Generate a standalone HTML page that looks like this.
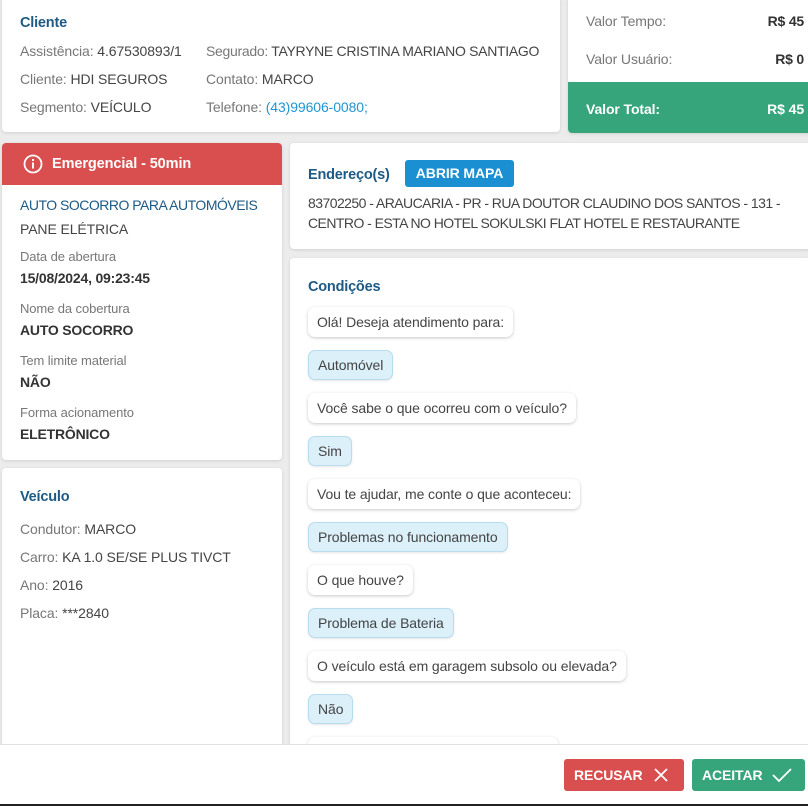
<!DOCTYPE html>
<html><head><meta charset="utf-8"><style>
*{margin:0;padding:0;box-sizing:border-box}
body{width:808px;height:806px;background:#ececec;font-family:"Liberation Sans",sans-serif;font-size:14px;color:#444;position:relative;overflow:hidden;letter-spacing:-0.1px}
.card{position:absolute;background:#fff;border-radius:4px;box-shadow:0 1px 3px rgba(0,0,0,.12)}
.t{position:absolute;white-space:nowrap;line-height:18px}
.h{color:#1d5a85;font-size:14.5px;font-weight:bold;letter-spacing:-0.2px}
.l{color:#777}
.s{color:#777;font-size:13px}
.b{font-weight:bold;color:#333;letter-spacing:-0.2px}
.bub{position:absolute;left:18px;height:30px;line-height:30px;padding:0 9px;border-radius:7px;background:#fff;box-shadow:0 1px 3px rgba(0,0,0,.22);white-space:nowrap;color:#444}
.bub.a{background:#dcf0fa;border:1px solid #b6dcee;line-height:28px;box-shadow:0 1px 2px rgba(0,0,0,.1)}
.btn{position:absolute;top:759px;height:32px;border-radius:3px;color:#fff;font-weight:bold;font-size:14px;line-height:32px;padding-left:10px}
</style></head><body>

<div class="card" style="left:2px;top:-4px;width:558px;height:136px">
<div class="t h" style="left:18px;top:18px">Cliente</div>
<div class="t" style="left:18px;top:46px"><span class="l">Assistência:</span> 4.67530893/1</div>
<div class="t" style="left:204px;top:46px;letter-spacing:-0.3px"><span class="l">Segurado:</span> TAYRYNE CRISTINA MARIANO SANTIAGO</div>
<div class="t" style="left:18px;top:74px"><span class="l">Cliente:</span> HDI SEGUROS</div>
<div class="t" style="left:204px;top:74px"><span class="l">Contato:</span> MARCO</div>
<div class="t" style="left:18px;top:102px"><span class="l">Segmento:</span> VEÍCULO</div>
<div class="t" style="left:204px;top:102px"><span class="l">Telefone:</span> <span style="color:#1e96d1">(43)99606-0080;</span></div>
</div>

<div class="card" style="left:568px;top:-4px;width:244px;height:137px;overflow:hidden">
<div class="t l" style="left:18px;top:16px">Valor Tempo:</div>
<div class="t b" style="right:8px;top:16px">R$ 45</div>
<div class="t l" style="left:18px;top:54px">Valor Usuário:</div>
<div class="t b" style="right:8px;top:54px">R$ 0</div>
<div style="position:absolute;left:0;top:86px;width:100%;height:51px;background:#36a57c"></div>
<div class="t" style="left:18px;top:104px;color:#fff;font-weight:bold">Valor Total:</div>
<div class="t" style="right:8px;top:104px;color:#fff;font-weight:bold">R$ 45</div>
</div>

<div class="card" style="left:2px;top:143px;width:280px;height:317px;overflow:hidden">
<div style="position:absolute;left:0;top:0;width:100%;height:42px;background:#d94f4f"></div>
<svg style="position:absolute;left:21px;top:11px" width="20" height="20" viewBox="0 0 20 20"><circle cx="10" cy="10" r="8.5" fill="none" stroke="#fff" stroke-width="1.8"/><rect x="9" y="8.5" width="2" height="6" fill="#fff"/><rect x="9" y="5" width="2" height="2" fill="#fff"/></svg>
<div class="t" style="left:50px;top:12px;color:#fff;font-weight:bold;font-size:14.5px">Emergencial - 50min</div>
<div class="t" style="left:18px;top:53px;color:#1d5a85;letter-spacing:-0.5px">AUTO SOCORRO PARA AUTOMÓVEIS</div>
<div class="t" style="left:18px;top:77px">PANE ELÉTRICA</div>
<div class="t s" style="left:18px;top:105px">Data de abertura</div>
<div class="t b" style="left:18px;top:126px">15/08/2024, 09:23:45</div>
<div class="t s" style="left:18px;top:157px">Nome da cobertura</div>
<div class="t b" style="left:18px;top:178px">AUTO SOCORRO</div>
<div class="t s" style="left:18px;top:209px">Tem limite material</div>
<div class="t b" style="left:18px;top:230px">NÃO</div>
<div class="t s" style="left:18px;top:261px">Forma acionamento</div>
<div class="t b" style="left:18px;top:282px">ELETRÔNICO</div>
</div>

<div class="card" style="left:2px;top:468px;width:280px;height:300px">
<div class="t h" style="left:18px;top:20px">Veículo</div>
<div class="t" style="left:18px;top:52px"><span class="l">Condutor:</span> MARCO</div>
<div class="t" style="left:18px;top:80px"><span class="l">Carro:</span> KA 1.0 SE/SE PLUS TIVCT</div>
<div class="t" style="left:18px;top:108px"><span class="l">Ano:</span> 2016</div>
<div class="t" style="left:18px;top:136px"><span class="l">Placa:</span> ***2840</div>
</div>

<div class="card" style="left:290px;top:143px;width:522px;height:106px">
<div class="t h" style="left:18px;top:23px">Endereço(s)</div>
<div style="position:absolute;left:115px;top:17px;width:109px;height:27px;background:#1a8fd1;border-radius:3px;color:#fff;font-weight:bold;line-height:27px;text-align:center">ABRIR MAPA</div>
<div class="t" style="left:18px;top:51px;letter-spacing:-0.55px">83702250 - ARAUCARIA - PR - RUA DOUTOR CLAUDINO DOS SANTOS - 131 -</div>
<div class="t" style="left:18px;top:71px;letter-spacing:-0.55px">CENTRO - ESTA NO HOTEL SOKULSKI FLAT HOTEL E RESTAURANTE</div>
</div>

<div class="card" style="left:290px;top:258px;width:522px;height:520px">
<div class="t h" style="left:18px;top:20px">Condições</div>
<div class="bub" style="top:49px">Olá! Deseja atendimento para:</div>
<div class="bub a" style="top:92px">Automóvel</div>
<div class="bub" style="top:135px">Você sabe o que ocorreu com o veículo?</div>
<div class="bub a" style="top:178px">Sim</div>
<div class="bub" style="top:221px">Vou te ajudar, me conte o que aconteceu:</div>
<div class="bub a" style="top:264px">Problemas no funcionamento</div>
<div class="bub" style="top:307px">O que houve?</div>
<div class="bub a" style="top:350px">Problema de Bateria</div>
<div class="bub" style="top:393px">O veículo está em garagem subsolo ou elevada?</div>
<div class="bub a" style="top:436px">Não</div>
<div class="bub" style="top:479px;width:250px">&nbsp;</div>
</div>

<div style="position:absolute;left:0;top:744px;width:808px;height:62px;background:#fff;border-top:1px solid #e2e2e2"></div>
<div class="btn" style="left:564px;width:120px;background:#d94f4f">RECUSAR
<svg style="position:absolute;left:90px;top:9px" width="14" height="14" viewBox="0 0 14 14"><path d="M1 1L13 13M13 1L1 13" stroke="#fff" stroke-width="1.8"/></svg></div>
<div class="btn" style="left:692px;width:113px;background:#36a57c">ACEITAR
<svg style="position:absolute;left:80px;top:8px" width="20" height="16" viewBox="0 0 20 16"><path d="M1 8L7 14L19 2" stroke="#fff" stroke-width="1.8" fill="none"/></svg></div>
<div style="position:absolute;left:0;top:804px;width:808px;height:2px;background:#222"></div>
</body></html>
